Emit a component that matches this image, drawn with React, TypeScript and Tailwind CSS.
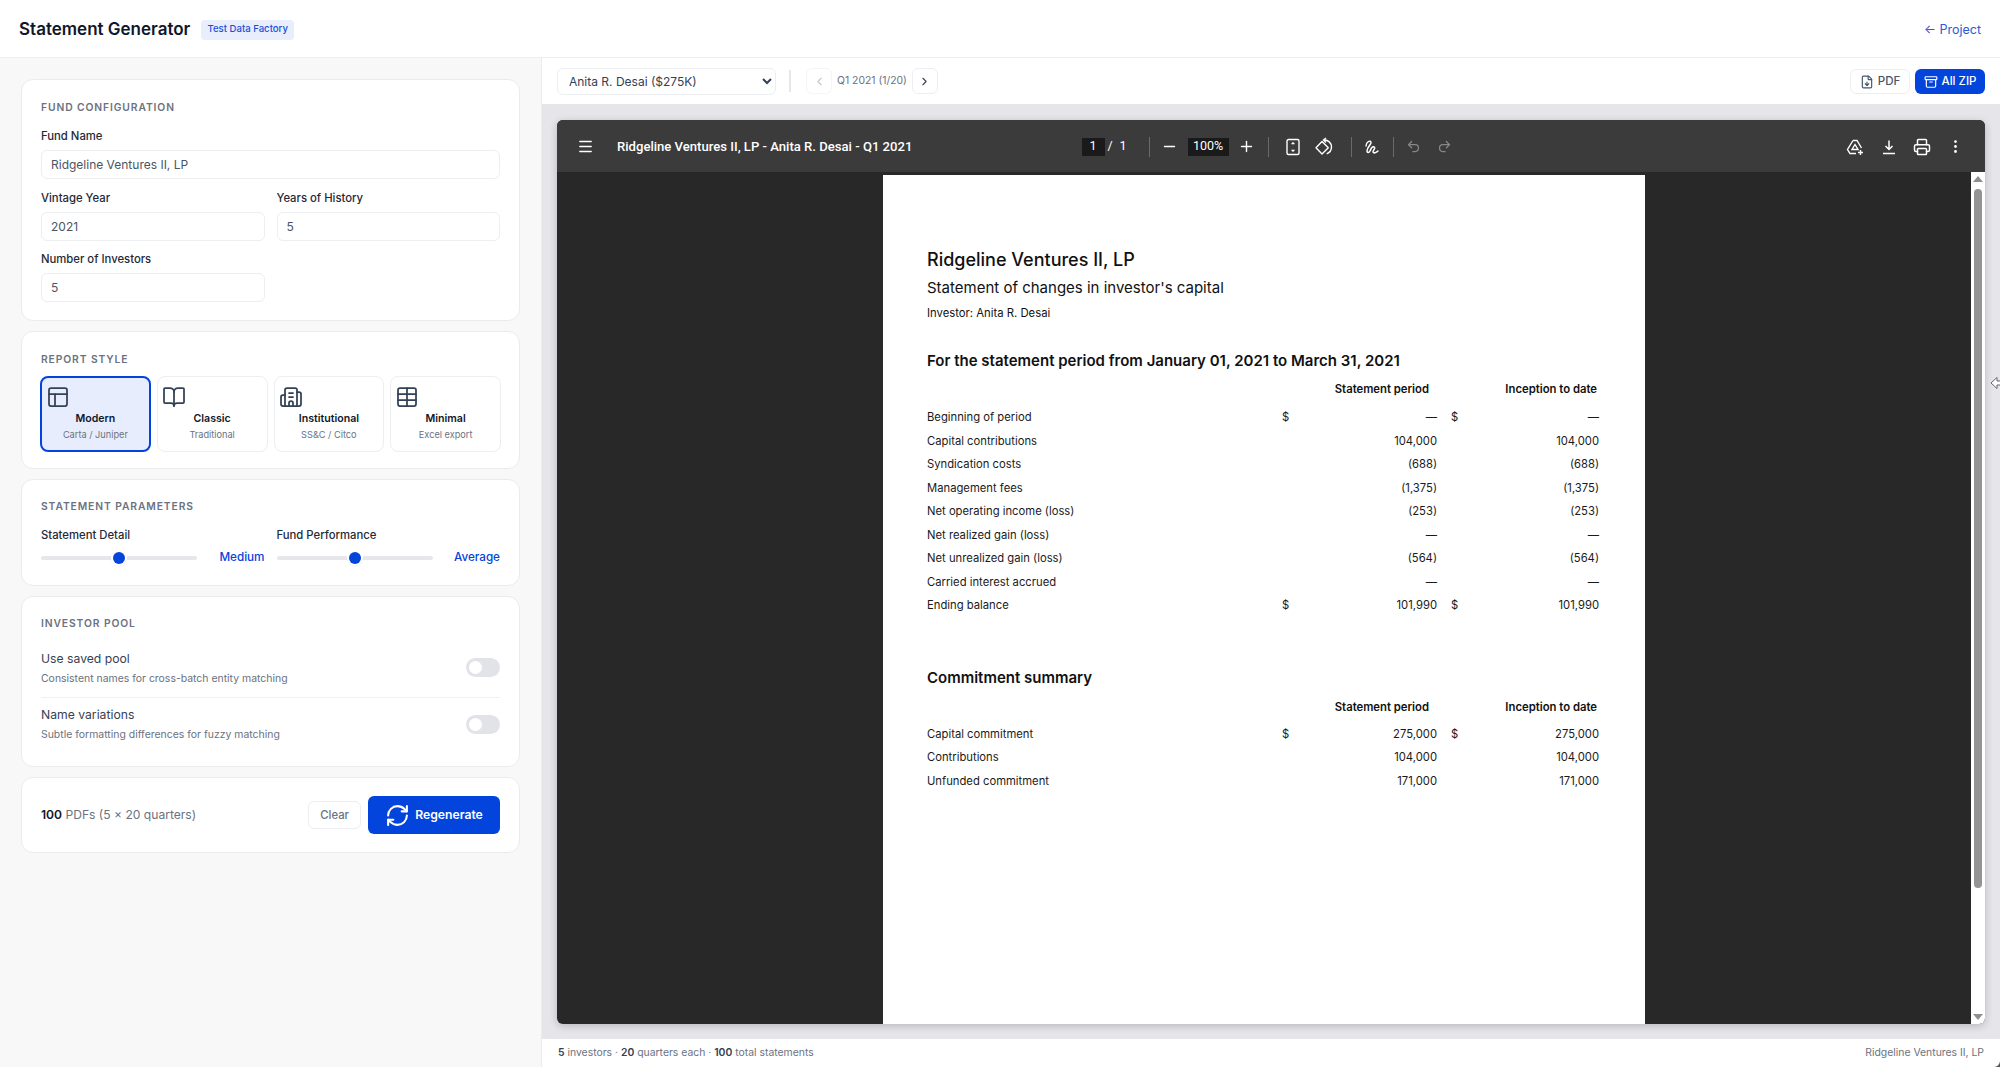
import {
  Archive,
  BookOpen,
  Building2,
  ChevronLeft,
  ChevronRight,
  FileDown,
  Menu,
  Minus,
  MoreVertical,
  PanelsTopLeft,
  Plus,
  Printer,
  Redo2,
  RefreshCw,
  Table,
  Undo2,
} from "lucide-react";

const styles = [
  { name: "Modern", sub: "Carta / Juniper", Icon: PanelsTopLeft, active: true },
  { name: "Classic", sub: "Traditional", Icon: BookOpen, active: false },
  { name: "Institutional", sub: "SS&C / Citco", Icon: Building2, active: false },
  { name: "Minimal", sub: "Excel export", Icon: Table, active: false },
];

const activity = [
  { label: "Beginning of period", a: "—", b: "—", dollar: true },
  { label: "Capital contributions", a: "104,000", b: "104,000" },
  { label: "Syndication costs", a: "(688)", b: "(688)" },
  { label: "Management fees", a: "(1,375)", b: "(1,375)" },
  { label: "Net operating income (loss)", a: "(253)", b: "(253)" },
  { label: "Net realized gain (loss)", a: "—", b: "—" },
  { label: "Net unrealized gain (loss)", a: "(564)", b: "(564)" },
  { label: "Carried interest accrued", a: "—", b: "—" },
  { label: "Ending balance", a: "101,990", b: "101,990", dollar: true },
];

const commitment = [
  { label: "Capital commitment", a: "275,000", b: "275,000", dollar: true },
  { label: "Contributions", a: "104,000", b: "104,000" },
  { label: "Unfunded commitment", a: "171,000", b: "171,000" },
];

type Row = { label: string; a: string; b: string; dollar?: boolean };

function SectionTitle({ children }: { children: string }) {
  return <h3 className="text-[10.3px] leading-[14px] font-semibold tracking-[0.9px] uppercase text-[#6b7280]">{children}</h3>;
}

function Field({ label, value, className = "" }: { label: string; value: string; className?: string }) {
  return (
    <label className={`block ${className}`}>
      <span className="block text-[11.3px] leading-[16px] font-medium text-[#1f2937] mb-[6px]">{label}</span>
      <input
        defaultValue={value}
        className="block w-full h-[29px] px-[9px] rounded-[6px] border border-[#eceef1] bg-white text-[12px] text-[#4b5563] outline-none"
      />
    </label>
  );
}

function Slider({ label, value }: { label: string; value: string }) {
  return (
    <div>
      <div className="text-[11.3px] leading-[16px] font-medium text-[#1f2937] mb-[7px]">{label}</div>
      <div className="flex items-center justify-between h-[16px]">
        <div className="relative w-[156px] h-[4px] rounded-full bg-[#e5e7eb]">
          <div className="absolute left-[72px] top-[-4px] w-[12px] h-[12px] rounded-full bg-[#0344dc] shadow-[0_0_0_2px_white,0_1px_3px_rgba(0,0,0,0.25)]"></div>
        </div>
        <span className="text-[11.7px] font-medium text-[#0344dc]">{value}</span>
      </div>
    </div>
  );
}

function Toggle({ title, sub, first }: { title: string; sub: string; first?: boolean }) {
  return (
    <div className={`flex items-center justify-between ${first ? "h-[60px] border-b border-[#f0f1f3]" : "h-[52px]"}`}>
      <div>
        <div className="text-[12.2px] leading-[18px] text-[#374151]">{title}</div>
        <div className="text-[10.45px] leading-[15px] mt-[3px] text-[#6b7280]">{sub}</div>
      </div>
      <div className="w-[34px] h-[19px] rounded-full bg-[#e1e3e8] p-[3px]">
        <div className="w-[13px] h-[13px] rounded-full bg-white"></div>
      </div>
    </div>
  );
}

function Card({ className = "", children }: { className?: string; children: React.ReactNode }) {
  return <section className={`rounded-[12px] border border-[#e9ebee] bg-white px-[19px] ${className}`}>{children}</section>;
}

function Divider({ className = "" }: { className?: string }) {
  return <span className={`w-[1px] h-[20px] bg-[#6a6a6a] ${className}`}></span>;
}

function PdfRows({ rows }: { rows: Row[] }) {
  return (
    <div>
      {rows.map((row) => (
        <div key={row.label} className="grid grid-cols-[355px_155px_14px_148px] h-[23.5px] items-center text-[11.25px] text-[#1a1a1a]">
          <span>{row.label}</span>
          <span className="flex justify-between">
            <span>{row.dollar ? "$" : ""}</span>
            <span>{row.a}</span>
          </span>
          <span></span>
          <span className="flex justify-between">
            <span>{row.dollar ? "$" : ""}</span>
            <span>{row.b}</span>
          </span>
        </div>
      ))}
    </div>
  );
}

function PdfHead() {
  return (
    <div className="grid grid-cols-[355px_147px_20px_148px] text-[11.3px] leading-[14px] font-semibold text-[#111]">
      <span></span>
      <span className="text-right">Statement period</span>
      <span></span>
      <span className="text-right">Inception to date</span>
    </div>
  );
}

export default function App() {
  return (
    <div className="relative h-[1067px] w-[2000px] flex flex-col overflow-hidden bg-white font-['Inter',sans-serif]">
      <header className="h-[58px] shrink-0 border-b border-[#eceef1] flex items-center justify-between pl-[19px] pr-[19px] pt-[2px]">
        <div className="flex items-center gap-[11px]">
          <h1 className="text-[17px] font-semibold text-[#0f172a]">Statement Generator</h1>
          <span className="h-[20px] px-[6px] rounded-[4px] bg-[#e8eefc] text-[9.6px] font-medium text-[#1d4ed8] flex items-center">Test Data Factory</span>
        </div>
        <a className="mt-[1px] text-[12.5px] text-[#2a5bd7]">← Project</a>
      </header>

      <div className="flex flex-1 min-h-0">
        <aside className="w-[542px] shrink-0 bg-[#f8f8f9] border-r border-[#e9ebee] px-[21px] pt-[21px] flex flex-col gap-[10px]">
          <Card className="h-[242px] pt-[20px]">
            <SectionTitle>Fund Configuration</SectionTitle>
            <div className="grid grid-cols-2 gap-x-[12px] gap-y-[10.5px] mt-[14px]">
              <Field label="Fund Name" value="Ridgeline Ventures II, LP" className="col-span-2" />
              <Field label="Vintage Year" value="2021" />
              <Field label="Years of History" value="5" />
              <Field label="Number of Investors" value="5" />
            </div>
          </Card>

          <Card className="h-[138px] pt-[20px]">
            <SectionTitle>Report Style</SectionTitle>
            <div className="grid grid-cols-4 gap-[6px] mt-[10px] -mx-[1px]">
              {styles.map(({ name, sub, Icon, active }) => (
                <div
                  key={name}
                  className={`h-[76px] rounded-[8px] px-[4px] ${
                    active ? "border-2 border-[#0344dc] bg-[#e8edfd] pt-[7px]" : "border border-[#eceef1] bg-white pt-[8px]"
                  }`}
                >
                  <Icon size={24} strokeWidth={1.75} className="text-[#334155]" />
                  <div className="mt-[2px] text-center text-[10.6px] leading-[15px] font-semibold text-[#0f172a]">{name}</div>
                  <div className="mt-[2px] text-center text-[9.2px] leading-[13px] text-[#6b7280]">{sub}</div>
                </div>
              ))}
            </div>
          </Card>

          <Card className="h-[107px] pt-[19px]">
            <SectionTitle>Statement Parameters</SectionTitle>
            <div className="grid grid-cols-2 gap-x-[12px] mt-[14px]">
              <Slider label="Statement Detail" value="Medium" />
              <Slider label="Fund Performance" value="Average" />
            </div>
          </Card>

          <Card className="h-[171px] pt-[19px]">
            <SectionTitle>Investor Pool</SectionTitle>
            <div className="mt-[8px]">
              <Toggle title="Use saved pool" sub="Consistent names for cross-batch entity matching" first />
              <Toggle title="Name variations" sub="Subtle formatting differences for fuzzy matching" />
            </div>
          </Card>

          <Card className="h-[76px] flex items-center justify-between">
            <div className="text-[12.1px] text-[#6b7280]">
              <strong className="font-semibold text-[#0f172a]">100</strong> PDFs (5 × 20 quarters)
            </div>
            <div className="flex items-center gap-[7px]">
              <button className="h-[28px] px-[11px] rounded-[6px] border border-[#eceef1] bg-white text-[11.3px] font-medium text-[#6b7280]">Clear</button>
              <button className="h-[38px] w-[132px] rounded-[6px] bg-[#0344dc] text-white text-[12.2px] font-semibold flex items-center justify-center gap-[5px]">
                <RefreshCw size={25} strokeWidth={2} />
                Regenerate
              </button>
            </div>
          </Card>
        </aside>

        <main className="flex-1 min-w-0 flex flex-col">
          <div className="h-[46px] shrink-0 flex items-center justify-between px-[15px]">
            <div className="flex items-center">
              <select className="w-[219px] h-[27px] rounded-[6px] border border-[#eceef1] bg-white pl-[7px] text-[12px] text-[#334155] outline-none">
                <option>Anita R. Desai ($275K)</option>
              </select>
              <span className="w-[2px] h-[22px] bg-[#e5e7eb] ml-[13px] mr-[15px]"></span>
              <button className="w-[26px] h-[26px] rounded-[6px] border border-[#f5f5f6] flex items-center justify-center text-[#c4c7cc]">
                <ChevronLeft size={13} />
              </button>
              <span className="text-[10.4px] text-[#6b7280] mx-[5px]">Q1 2021 (1/20)</span>
              <button className="w-[26px] h-[26px] rounded-[6px] border border-[#eceef1] flex items-center justify-center text-[#374151]">
                <ChevronRight size={13} />
              </button>
            </div>
            <div className="flex items-center gap-[5px] mt-[1px]">
              <button className="h-[25px] w-[60px] rounded-[6px] border border-[#eceef1] text-[11.5px] font-medium text-[#475569] flex items-center justify-center gap-[4px]">
                <FileDown size={14} />
                PDF
              </button>
              <button className="h-[25px] w-[70px] rounded-[6px] bg-[#0344dc] text-[11.5px] font-medium text-white flex items-center justify-center gap-[4px]">
                <Archive size={14} />
                All ZIP
              </button>
            </div>
          </div>

          <div className="flex-1 min-h-0 bg-[#e5e5ea] px-[15px] pt-[16px] pb-[15px]">
            <div className="h-full rounded-[6px] overflow-hidden flex flex-col bg-[#282828] shadow-[0_2px_8px_rgba(0,0,0,0.2)]">
              <div className="h-[52px] shrink-0 bg-[#3b3b3b] flex items-center justify-between text-white font-['Roboto',sans-serif] pl-[20px] pr-[21px] pt-[1px]">
                <div className="flex items-center w-[392px]">
                  <Menu size={17} />
                  <span className="ml-[23px] text-[13.1px] font-medium whitespace-nowrap">Ridgeline Ventures II, LP - Anita R. Desai - Q1 2021</span>
                </div>
                <div className="flex items-center text-[12.5px]">
                  <span className="w-[23px] h-[18px] bg-[#1a1a1a] flex items-center justify-center">1</span>
                  <span className="w-[5px] ml-[3px] text-center">/</span>
                  <span className="w-[6px] ml-[7px] text-center">1</span>
                  <Divider className="ml-[23px]" />
                  <Minus size={17} className="ml-[11px] -mr-[2px]" />
                  <span className="w-[41px] h-[18px] bg-[#1a1a1a] flex items-center justify-center ml-[12px]">100%</span>
                  <Plus size={17} className="ml-[9px] -mr-[1px]" />
                  <Divider className="ml-[14px]" />
                  <svg width="18" height="18" viewBox="0 0 18 18" fill="none" stroke="white" strokeWidth="1.4" className="ml-[15px]">
                    <rect x="3" y="1.500" width="12" height="15" rx="1.500" />
                    <path d="M7.500 6 9 4.200 10.500 6ZM7.500 12 9 13.800 10.500 12Z" fill="white" strokeWidth="0.6" />
                  </svg>
                  <svg width="20" height="20" viewBox="0 0 20 20" fill="none" stroke="white" strokeWidth="1.4" className="ml-[12px]">
                    <path d="M8 4.500 2 10.800 8 17 14.300 10.800Z" strokeLinejoin="round" />
                    <path d="M10 3a7 7 0 0 1 7.500 7c0 3-1.800 5.600-4.800 6.800M12 1 9.500 3l2.500 2.500" />
                  </svg>
                  <Divider className="ml-[17px]" />
                  <svg width="20" height="20" viewBox="0 0 20 20" fill="none" stroke="white" strokeWidth="1.5" strokeLinecap="round" className="ml-[9px]">
                    <path d="M5 9C5 5 9 3 10 5 11 7 6 10 6 14 6 16 8 16 9 14 10 12 11 9 13 10 15 11 12 13 12 15 13 17 16 15 17 14" />
                  </svg>
                  <Divider className="ml-[12px]" />
                  <Undo2 size={15} className="text-[#888] ml-[12px]" />
                  <Redo2 size={15} className="text-[#888] ml-[16px]" />
                </div>
                <div className="w-[400px] flex items-center justify-end gap-[15px]">
                  <svg width="18" height="18" viewBox="0 0 18 18" fill="none" stroke="white" strokeWidth="1.4" className="mr-[1px]">
                    <path d="M7 2.500h4l4.500 7.500M7 2.500 1.500 11.500l2.500 4h6" />
                    <path d="M9 6.500 6 11.500h6Z" />
                    <path d="M14.500 12v5M12 14.500h5" />
                  </svg>
                  <svg width="18" height="18" viewBox="0 0 18 18" fill="none" stroke="white" strokeWidth="1.5">
                    <path d="M9 2.500v9M5.500 8 9 11.500 12.500 8M3 15.500h12" />
                  </svg>
                  <Printer size={18} className="mr-[1px]" />
                  <MoreVertical size={17} />
                </div>
              </div>
              <div className="flex-1 min-h-0 flex">
                <div className="flex-1 min-w-0 flex justify-center overflow-hidden pt-[3px]">
                  <div className="w-[762px] h-[1000px] bg-white shrink-0 pl-[44px] pr-[46px] pt-[74px] text-[#111] font-['Inter',sans-serif]">
                    <div className="text-[18px] leading-[22px] font-medium">Ridgeline Ventures II, LP</div>
                    <div className="mt-[7px] text-[15px] leading-[20px]">Statement of changes in investor's capital</div>
                    <div className="mt-[7px] text-[11.3px] leading-[16px]">Investor: Anita R. Desai</div>
                    <div className="mt-[30px] text-[15px] leading-[20px] font-semibold">For the statement period from January 01, 2021 to March 31, 2021</div>
                    <div className="mt-[11px]"><PdfHead /></div>
                    <div className="mt-[10px]"><PdfRows rows={activity} /></div>
                    <div className="mt-[50px] text-[15px] leading-[20px] font-semibold">Commitment summary</div>
                    <div className="mt-[12px]"><PdfHead /></div>
                    <div className="mt-[9px]"><PdfRows rows={commitment} /></div>
                  </div>
                </div>
                <div className="w-[14px] shrink-0 bg-white flex flex-col items-center">
                  <div className="mt-[4px] w-0 h-0 border-x-[5px] border-x-transparent border-b-[6px] border-b-[#8f8f8f]"></div>
                  <div className="mt-[7px] w-[8px] h-[699px] rounded-full bg-[#949494]"></div>
                  <div className="mt-auto mb-[4px] w-0 h-0 border-x-[5px] border-x-transparent border-t-[6px] border-t-[#8f8f8f]"></div>
                </div>
              </div>
            </div>
          </div>

          <footer className="h-[28px] shrink-0 flex items-center justify-between px-[16px] text-[10.4px] text-[#6b7280]">
            <span>
              <strong className="font-semibold text-[#374151]">5</strong> investors · <strong className="font-semibold text-[#374151]">20</strong> quarters each · <strong className="font-semibold text-[#374151]">100</strong> total statements
            </span>
            <span>Ridgeline Ventures II, LP</span>
          </footer>
        </main>
      </div>
      <svg width="12" height="14" viewBox="0 0 12 14" className="absolute left-[1990px] top-[376px]">
        <path d="M1 7 7 1.500V5h5v4H7v3.500Z" fill="white" stroke="#666" strokeWidth="1" />
      </svg>
      <svg width="6" height="6" viewBox="0 0 6 6" className="absolute right-0 bottom-0">
        <path d="M6 0v6H0a6 6 0 0 0 6-6Z" fill="#555" />
      </svg>
    </div>
  );
}
